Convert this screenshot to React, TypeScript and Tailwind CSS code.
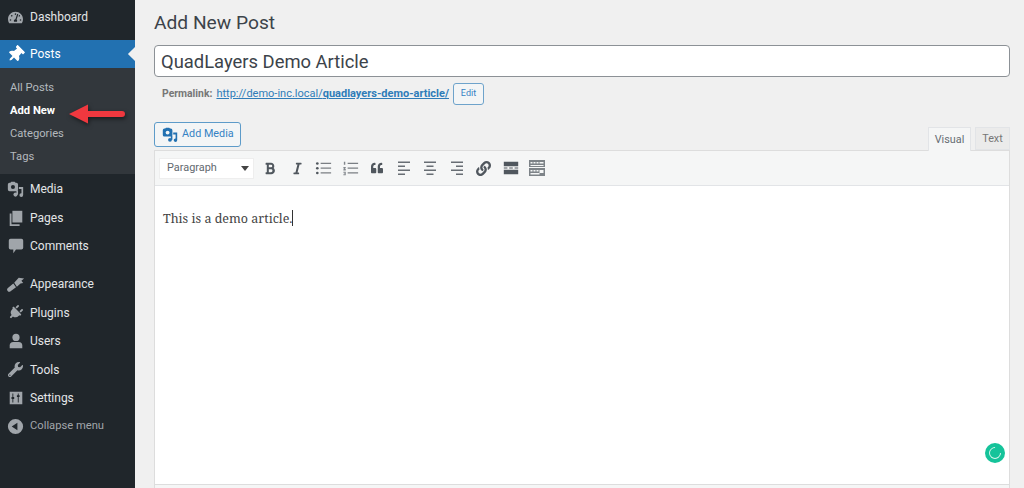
import { FaBold, FaItalic, FaLink, FaPlug, FaQuoteLeft, FaTachometerAlt, FaThumbtack, FaWrench } from "react-icons/fa";

const font = { fontFamily: 'Roboto, "Noto Sans", sans-serif' };

function MediaIcon({ className }: { className: string }) {
  return (
    <svg viewBox="0 0 20 20" className={className} fill="currentColor">
      <path d="M1 4a2 2 0 0 1 2-2h1l1-1h4l1 1h1a2 2 0 0 1 2 2v6a2 2 0 0 1-2 2H3a2 2 0 0 1-2-2z" />
      <circle cx="7" cy="7" r="2.4" fill="var(--hole)" />
      <path d="M14 7h5v9.5a2.2 2.2 0 1 1-2-2.2V9.500h-3z" />
      <circle cx="10" cy="16" r="2.400" />
      <path d="M11 11h2v5h-2z" />
    </svg>
  );
}

function PagesIcon() {
  return (
    <svg viewBox="0 0 20 20" className="w-[18px] h-[18px]" fill="currentColor">
      <path d="M6 2h11v13H6z" />
      <path d="M3 5h2v12h9v2H3z" />
    </svg>
  );
}

function CommentsIcon() {
  return (
    <svg viewBox="0 0 20 20" className="w-[18px] h-[18px]" fill="currentColor">
      <path d="M4 2h12a2 2 0 0 1 2 2v8a2 2 0 0 1-2 2h-6l-3 4v-4H4a2 2 0 0 1-2-2V4a2 2 0 0 1 2-2z" />
    </svg>
  );
}

function BrushIcon() {
  return (
    <svg viewBox="0 0 20 20" className="w-[18px] h-[18px]" fill="currentColor">
      <path d="M1 14.500 7 9.500l3 4-6 4.500a2 2 0 0 1-3-3.500z" />
      <path d="M8 8.500 13 3l6 1-3 2.500 2 2.500-3 .5-4 3.500z" />
    </svg>
  );
}

function UserIcon() {
  return (
    <svg viewBox="0 0 20 20" className="w-[18px] h-[18px]" fill="currentColor">
      <circle cx="10" cy="6" r="4" />
      <path d="M3 18v-3a4 4 0 0 1 4-4h6a4 4 0 0 1 4 4v3z" />
    </svg>
  );
}

function SettingsIcon() {
  return (
    <svg viewBox="0 0 20 20" className="w-[18px] h-[18px]" fill="currentColor">
      <path fillRule="evenodd" d="M3 3h14v14H3zM6 5v4H5v2h1v4h1v-4h1V9H7V5zm6 0v2h-1v2h1v6h1V9h1V7h-1V5z" />
    </svg>
  );
}

function CollapseIcon() {
  return (
    <svg viewBox="0 0 20 20" className="w-[19px] h-[19px]" fill="currentColor">
      <path fillRule="evenodd" d="M10 2a8 8 0 1 1 0 16 8 8 0 0 1 0-16zm2 4-6 4 6 4z" />
    </svg>
  );
}

function ListIcon({ ordered }: { ordered?: boolean }) {
  return (
    <svg viewBox="0 0 20 20" className="w-[19px] h-[19px]" fill="currentColor">
      <path d="M7 4h11v1.200H7zM7 9h11v1.200H7zM7 14h11v1.200H7z" opacity={0.75} />
      {ordered ? (
        <path d="M3 3h1.500v3H3zM2.500 8.500H5v1L4 10.500h1V12H2.500v-1l1-1h-1zM2.500 13.500H5V17H2.500v-1H4v-.5H3v-.5h1v-.5H2.500z" opacity={0.7} />
      ) : (
        <>
          <circle cx="3.500" cy="4.700" r="1.400" />
          <circle cx="3.500" cy="9.700" r="1.400" />
          <circle cx="3.500" cy="14.700" r="1.400" />
        </>
      )}
    </svg>
  );
}

function AlignIcon({ kind }: { kind: "left" | "center" | "right" }) {
  const d = {
    left: "M4 3.500h12v1.500H4zM4 7.500h7v1.500H4zM4 11.500h12v1.500H4zM4 15.500h7v1.500H4z",
    center: "M4 3.500h12v1.500H4zM6.500 7.500h7v1.500h-7zM4 11.500h12v1.500H4zM6.500 15.500h7v1.500h-7z",
    right: "M4 3.500h12v1.500H4zM9 7.500h7v1.500H9zM4 11.500h12v1.500H4zM9 15.500h7v1.500H9z",
  }[kind];
  return (
    <svg viewBox="0 0 20 20" className="w-[20px] h-[20px] opacity-85" fill="currentColor">
      <path d={d} />
    </svg>
  );
}

function MoreIcon() {
  return (
    <svg viewBox="0 0 20 20" className="w-[18px] h-[18px]" fill="currentColor">
      <path d="M2 3h16v5H2zM2 12h16v5H2zM2 9.500h4v1H2zM8 9.500h4v1H8zM14 9.500h4v1h-4z" />
    </svg>
  );
}

function KitchenIcon() {
  return (
    <svg viewBox="0 0 20 20" className="w-[20px] h-[20px] text-[#7d8388]" fill="currentColor">
      <path fillRule="evenodd" d="M2 2h16v7H2zM2 10h16v8H2zM3.500 4v1.500h2V4zm3 0v1.500h2V4zm3 0v1.500h2V4zm3 0v1.500h4V4zm-9 3v1h13V7zm0 5v1.500h2V12zm3 0v1.500h2V12zm3 0v1.500h2V12zm3 0v3h4v-3zm-9 3v1.500h9V15z" />
    </svg>
  );
}

function MenuItem({ icon, label, className = "" }: { icon: React.ReactNode; label: string; className?: string }) {
  return (
    <div className={`flex items-center h-[28.5px] text-[12px] text-[#e3e5e7] ${className}`}>
      <span className="w-[30px] flex justify-center pl-[1px] text-[#a0a5aa]">{icon}</span>
      <span>{label}</span>
    </div>
  );
}

function Sidebar() {
  return (
    <aside className="w-[135px] shrink-0 bg-[#20262b] pt-[3px] relative">
      <MenuItem icon={<FaTachometerAlt className="w-[15px] h-[15px]" />} label="Dashboard" />
      <div className="mt-[8.500px] relative flex items-center h-[28px] bg-[#2271b1] text-white text-[12px]">
        <span className="w-[30px] flex justify-center pl-[1px]">
          <FaThumbtack className="w-[17px] h-[17px] rotate-45" />
        </span>
        <span>Posts</span>
        <span className="absolute right-[-5px] top-[9px] w-[10px] h-[10px] rotate-45 bg-[#f0f0f0]" />
      </div>
      <div className="bg-[#32373c] h-[106px] pt-[9px] text-[11.200px] text-[#b4b9be]">
        <div className="h-[23px] pl-[10px] flex items-center">All Posts</div>
        <div className="h-[23px] pl-[10px] flex items-center font-bold text-white">Add New</div>
        <div className="h-[23px] pl-[10px] flex items-center">Categories</div>
        <div className="h-[23px] pl-[10px] flex items-center">Tags</div>
      </div>
      <div className="pt-[1px]">
        <MenuItem icon={<MediaIcon className="w-[17px] h-[17px] [--hole:#20262b]" />} label="Media" />
        <MenuItem icon={<PagesIcon />} label="Pages" />
        <MenuItem icon={<CommentsIcon />} label="Comments" />
        <MenuItem className="mt-[9.500px]" icon={<BrushIcon />} label="Appearance" />
        <MenuItem icon={<FaPlug className="w-[15px] h-[15px] rotate-45" />} label="Plugins" />
        <MenuItem icon={<UserIcon />} label="Users" />
        <MenuItem icon={<FaWrench className="w-[15px] h-[15px]" />} label="Tools" />
        <MenuItem icon={<SettingsIcon />} label="Settings" />
        <div className="flex items-center h-[28.500px] text-[11.200px] text-[#a0a5aa]">
          <span className="w-[30px] flex justify-center pl-[1px] text-[#a0a5aa]"><CollapseIcon /></span>
          <span>Collapse menu</span>
        </div>
      </div>
      {/* annotation arrow drawn over the menu */}
      <svg viewBox="0 0 60 22" className="absolute left-[67px] top-[103px] w-[60px] h-[22px] drop-shadow-[1px_2px_2px_rgba(0,0,0,0.5)]">
        <path d="M2 11 21 1.500v6.500h34a3 3 0 0 1 0 6H21v6.500z" fill="#f0383f" />
      </svg>
    </aside>
  );
}

function Toolbar() {
  const cell = "w-[26.700px] flex justify-center text-[#50575e]";
  return (
    <div className="h-[35px] bg-[#f5f6f6] flex items-center pl-[4px] border-b border-[#e2e4e7]">
      <div className="w-[95px] h-[21px] bg-white border border-[#eeeeee] flex items-center justify-between pl-[7px] pr-[4px] pt-[1px] text-[10.900px] text-[#62696f] mr-[3px]">
        <span>Paragraph</span>
        <span className="w-0 h-0 border-x-[4px] border-x-transparent border-t-[5px] border-t-[#444]" />
      </div>
      <span className={cell}><FaBold className="w-[10px] h-[13px]" /></span>
      <span className={cell}><FaItalic className="w-[11px] h-[13px]" /></span>
      <span className={cell}><ListIcon /></span>
      <span className={cell}><ListIcon ordered /></span>
      <span className={cell}><FaQuoteLeft className="w-[14px] h-[12px]" /></span>
      <span className={cell}><AlignIcon kind="left" /></span>
      <span className={cell}><AlignIcon kind="center" /></span>
      <span className={cell}><AlignIcon kind="right" /></span>
      <span className={cell}><FaLink className="w-[15px] h-[15px]" /></span>
      <span className={cell}><MoreIcon /></span>
      <span className={cell}><KitchenIcon /></span>
    </div>
  );
}

export default function App() {
  return (
    <div className="h-[488px] w-[1024px] flex overflow-hidden bg-[#f0f0f0]" style={font}>
      <Sidebar />
      <main className="flex-1 pl-[19px] pr-[14px] min-w-0">
        <h1 className="text-[19.200px] leading-[25px] pt-[10px] text-[#3c434a]">Add New Post</h1>
        <div className="mt-[10px] h-[32px] bg-white border border-[#8c9196] rounded-[4px] flex items-center pl-[6px] pt-[1px] text-[18.400px] text-[#3c434a]">
          QuadLayers Demo Article
        </div>
        <div className="mt-[6px] h-[22px] flex items-center pl-[8px] text-[10.400px] text-[#777]">
          <span className="font-bold mr-[4px]">Permalink:</span>
          <span className="text-[#2f7cb8] underline text-[11px]">
            http://demo-inc.local/<b>quadlayers-demo-article/</b>
          </span>
          <span className="ml-[4px] w-[31px] h-[22px] border border-[#6ea3cb] rounded-[3px] bg-[#f3f5f6] text-[#3582c4] text-[9px] flex items-center justify-center">
            Edit
          </span>
        </div>
        <div className="mt-[17px] flex items-end justify-between h-[28px]">
          <div className="self-start w-[87px] h-[25px] border border-[#5d9bc9] rounded-[3px] bg-[#f3f5f6] text-[#3582c4] flex items-center pl-[7px] gap-[4px] text-[10.800px]">
            <MediaIcon className="w-[16px] h-[16px] text-[#2271b1] [--hole:#f3f5f6]" />
            <span>Add Media</span>
          </div>
          <div className="flex items-start gap-[4px] text-[10.800px] text-[#666d73]">
            <div className="w-[43px] h-[24px] -mb-px pt-[1px] relative bg-[#f5f6f6] border border-b-0 border-[#e2e4e7] flex items-center justify-center">Visual</div>
            <div className="w-[35px] h-[23px] pt-[1px] bg-[#ebebeb] border border-[#e2e4e7] flex items-center justify-center text-[#777]">Text</div>
          </div>
        </div>
        <div className="border border-[#dddddd] bg-white h-[401px]">
          <Toolbar />
          <div className="relative h-[299px] bg-white border-b border-[#dddddd]">
            <p
              className="pt-[23px] pl-[8px] text-[12.500px] leading-[20px] text-[#444]"
              style={{ fontFamily: '"Noto Serif", "DejaVu Serif", "Liberation Serif", serif' }}
            >
              This is a demo article.
              <span className="inline-block w-px h-[16px] bg-[#333] align-[-3px]" />
            </p>
            <div className="absolute right-[4px] bottom-[21px] w-[20px] h-[20px] rounded-full bg-[#15c39a] flex items-center justify-center">
              <span className="w-[12px] h-[12px] rounded-full border-[1.500px] border-[#d8f5ec] border-r-transparent rotate-[-45deg]" />
            </div>
          </div>
          <div className="h-[4px] bg-[#f5f6f6]" />
        </div>
      </main>
    </div>
  );
}
